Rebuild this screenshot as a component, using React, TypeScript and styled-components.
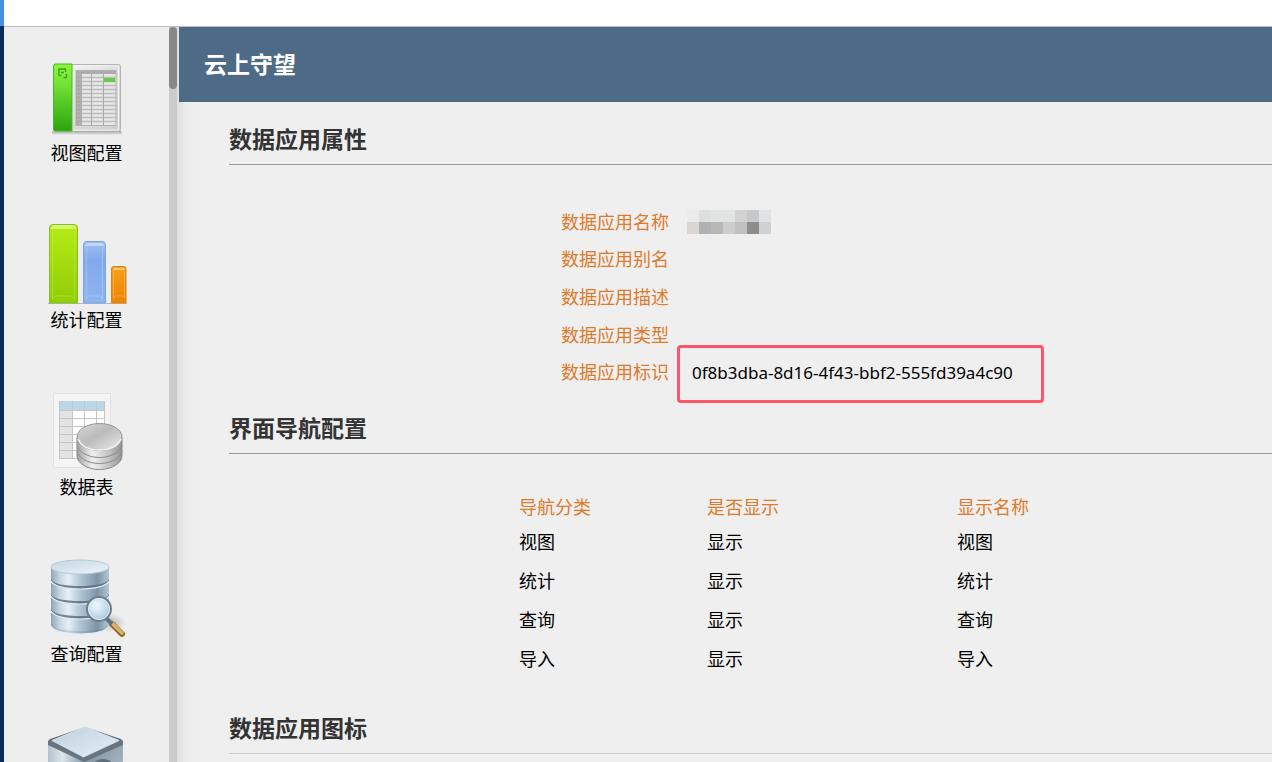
import React from 'react';
import styled, { createGlobalStyle } from 'styled-components';

const GlobalStyle = createGlobalStyle`
  * { box-sizing: border-box; }
  body {
    margin: 0;
    background: #efefef;
    color: #000;
    font-family: "Noto Sans", "Noto Sans CJK SC", sans-serif;
    font-size: 18px;
    line-height: 26px;
  }
`;

const Page = styled.div`
  display: flex;
  height: 100vh;
  overflow: hidden;
`;

const Rail = styled.div`
  flex: none;
  width: 4px;
  background: #0a2c5a;
`;

const RailTop = styled.div`
  height: 26px;
  background: #4a90e2;
`;

const Shell = styled.div`
  flex: 1;
  min-width: 0;
  display: flex;
  flex-direction: column;
`;

const TopBar = styled.header`
  flex: none;
  height: 27px;
  background: #fff;
  border-bottom: 1px solid #bdbdbd;
`;

const Body = styled.div`
  flex: 1;
  min-height: 0;
  display: flex;
`;

const Sidebar = styled.nav`
  flex: none;
  width: 165px;
  padding-top: 30px;
  display: flex;
  flex-direction: column;
  gap: 58px;
  background: #eee;
  overflow: hidden;
`;

const SideItem = styled.a`
  flex: none;
  display: flex;
  flex-direction: column;
  align-items: center;
  gap: 3px;
  color: #000;
  text-decoration: none;
`;

const Icon = styled.svg`
  display: block;
  width: 80px;
  height: 80px;
`;

const ScrollTrack = styled.div`
  flex: none;
  width: 8px;
  background: #cbcbcb;
`;

const ScrollThumb = styled.div`
  height: 62px;
  border-radius: 4px;
  background: #888;
`;

const Main = styled.main`
  flex: 1;
  min-width: 0;
  padding-left: 2px;
  overflow: hidden;
  background: linear-gradient(to right, #dedede 0, #ebebeb 8px, #efefef 18px);
`;

const TitleBar = styled.div`
  height: 75px;
  padding: 0 25px 2px;
  display: flex;
  align-items: center;
  background: #4d6b86;
`;

const Title = styled.h1`
  margin: 0;
  color: #fff;
  font-size: 23px;
  line-height: 32px;
  font-weight: 700;
`;

const Content = styled.div`
  padding: 21px 0 0 50px;
`;

const SectionTitle = styled.h2<{ $faint?: boolean }>`
  margin: 0;
  padding-bottom: 9px;
  border-bottom: 1px solid ${(p) => (p.$faint ? '#ccc' : '#999')};
  color: #333;
  font-size: 23px;
  line-height: 32px;
  font-weight: 700;
`;

const Fields = styled.dl`
  margin: 38px 0 21px 332px;
  height: 188px;
  display: grid;
  grid-template-columns: 126px 1fr;
  grid-template-rows: repeat(5, 1fr);
  align-items: center;
`;

const FieldName = styled.dt`
  color: #dd7a2b;
`;

const FieldValue = styled.dd`
  margin: 0;
`;

const Marked = styled.span`
  position: relative;
  padding-left: 5px;
  font-size: 17px;
`;

const Mark = styled.span`
  position: absolute;
  left: -10px;
  top: -16px;
  width: 367px;
  height: 58px;
  border: 3px solid #ff5566;
  border-radius: 4px;
`;

const Mosaic = styled.div`
  display: grid;
  grid-template-columns: repeat(7, 12px);
  width: 84px;
`;

const Tile = styled.span<{ $tone: string }>`
  height: 12px;
  background: ${(p) => p.$tone};
`;

const NavTable = styled.table`
  margin: 38px 0 34px 290px;
  border-collapse: collapse;
  table-layout: fixed;
  width: 600px;
`;

const HeadCell = styled.th<{ $width?: number }>`
  width: ${(p) => (p.$width ? `${p.$width}px` : 'auto')};
  height: 30px;
  padding: 0;
  color: #dd7a2b;
  font-weight: 400;
  text-align: left;
`;

const Cell = styled.td`
  height: 39px;
  padding: 0;
`;

const ViewIcon = () => (
  <Icon viewBox="0 0 80 80" aria-hidden="true">
    <defs>
      <linearGradient id="vGreen" x1="0" y1="0" x2="0" y2="1">
        <stop offset="0" stopColor="#8cf53c" />
        <stop offset="0.3" stopColor="#74e235" />
        <stop offset="1" stopColor="#2ba40f" />
      </linearGradient>
      <linearGradient id="vPaper" x1="0" y1="0" x2="1" y2="1">
        <stop offset="0" stopColor="#fafafa" />
        <stop offset="0.5" stopColor="#dedede" />
        <stop offset="1" stopColor="#cdcdcd" />
      </linearGradient>
      <linearGradient id="vShadow" x1="0" y1="0" x2="0" y2="1">
        <stop offset="0" stopColor="#555" stopOpacity="0.5" />
        <stop offset="1" stopColor="#555" stopOpacity="0" />
      </linearGradient>
    </defs>
    <rect x="5" y="74" width="70" height="4" rx="2" fill="url(#vShadow)" />
    <rect x="6.5" y="7.5" width="67" height="67" rx="2" fill="url(#vPaper)" stroke="#b4b4b4" />
    <path d="M25.500 9h46v64h-46z" fill="none" stroke="#f8f8f8" strokeWidth="1" opacity="0.8" />
    <path d="M8.500 7H25v67H8.500A2 2 0 0 1 6.500 72V9a2 2 0 0 1 2-2z" fill="url(#vGreen)" stroke="#46b624" />
    <path d="M18.500 15v-3h-6.500v6.500h2.500M19.500 17v3.500h-3M14 15.500h3" fill="none" stroke="#39a520" strokeWidth="1.400" />
    <rect x="29" y="13.500" width="40" height="55" fill="#e7e7e7" stroke="#b2b2b2" />
    <path d="M29 20.500h40M29 24.500h40M29 28.500h40M29 32.500h40M29 36.500h40M29 40.500h40M29 44.500h40M29 48.500h40M29 52.500h40M29 56.500h40M29 60.500h40M29 64.500h40" stroke="#bcbcbc" strokeWidth="1.400" />
    <rect x="29" y="14" width="6" height="54" fill="#a2a2a2" opacity="0.8" />
    <rect x="29" y="14" width="40" height="3" fill="#acacac" />
    <path d="M44.500 14v54M56.500 14v54" stroke="#aaa" />
    <rect x="57" y="21" width="11" height="4" fill="#6bc944" />
  </Icon>
);

const StatsIcon = () => (
  <Icon viewBox="0 0 80 80" aria-hidden="true">
    <defs>
      <linearGradient id="sGreen" x1="0" y1="0" x2="0" y2="1">
        <stop offset="0" stopColor="#b6eb16" />
        <stop offset="1" stopColor="#8fce06" />
      </linearGradient>
      <linearGradient id="sBlue" x1="0" y1="0" x2="0" y2="1">
        <stop offset="0" stopColor="#9cc0f6" />
        <stop offset="0.3" stopColor="#82a9ea" />
        <stop offset="1" stopColor="#8eb4f2" />
      </linearGradient>
      <linearGradient id="sOrange" x1="0" y1="0" x2="0" y2="1">
        <stop offset="0" stopColor="#f9a01a" />
        <stop offset="1" stopColor="#ee8400" />
      </linearGradient>
    </defs>
    <path d="M1 79.500h79" stroke="#b8b8b8" />
    <path d="M2.500 79V4q0-3.500 3.500-3.500h21q3.500 0 3.500 3.500v75z" fill="url(#sGreen)" stroke="#8dbb2c" />
    <path d="M4 5q0-4 4-4h17q4 0 4 4z" fill="#d9f77e" opacity="0.850" />
    <path d="M5.500 8v67l3-3h16l3 3V8" fill="none" stroke="#c4ee5a" opacity="0.450" />
    <path d="M36.500 79V21q0-3.500 3.500-3.500h15q3.500 0 3.500 3.500v58z" fill="url(#sBlue)" stroke="#7fa6e4" />
    <path d="M38 22q0-3 3-3h13q3 0 3 3z" fill="#c1d8fb" />
    <path d="M39.500 23v52l2-3h12l2 3V23" fill="none" stroke="#b9d3fb" opacity="0.500" />
    <path d="M64.500 79V45q0-2.500 2.500-2.500h9.500q2.500 0 2.500 2.500v34z" fill="url(#sOrange)" stroke="#d98220" />
    <path d="M66 46q0-2 2-2h8q2 0 2 2z" fill="#fcc875" />
    <path d="M66.500 47v27l2-2h7l2 2V47" fill="none" stroke="#fab653" opacity="0.700" />
  </Icon>
);

const TableIcon = () => (
  <Icon viewBox="0 0 80 80" aria-hidden="true">
    <defs>
      <linearGradient id="tSide" x1="0" y1="0" x2="1" y2="0">
        <stop offset="0" stopColor="#a2a2a2" />
        <stop offset="0.35" stopColor="#f0f0f0" />
        <stop offset="0.7" stopColor="#c4c4c4" />
        <stop offset="1" stopColor="#949494" />
      </linearGradient>
      <linearGradient id="tTop" x1="0" y1="0" x2="1" y2="1">
        <stop offset="0" stopColor="#d8d8d8" />
        <stop offset="0.45" stopColor="#bbb" />
        <stop offset="1" stopColor="#ececec" />
      </linearGradient>
    </defs>
    <rect x="6.500" y="2.500" width="57" height="74" rx="1" fill="#f5f5f5" stroke="#e2e2e2" />
    <rect x="12" y="10" width="46" height="58" fill="#fff" />
    <rect x="12" y="10" width="14" height="58" fill="#e3e3e3" />
    <rect x="12" y="10" width="46" height="9" fill="#bcd8e8" />
    <path d="M12 19.500h46M12 27.500h46M12 35.500h46M12 43.500h46M12 51.500h46M12 59.500h46M12.500 10v58M25.500 10v58M37.500 10v58M49.500 10v58M57.500 10v58M12 67.500h46" stroke="#c5c5c5" />
    {[18, 12, 6].map((y) => (
      <path
        key={y}
        d="M30 41v6c0 7 10 13.500 22.500 13.500S75 54 75 47v-6z"
        transform={`translate(0 ${y})`}
        fill="url(#tSide)"
        stroke="#8c8c8c"
      />
    ))}
    <ellipse cx="52.500" cy="46" rx="22.500" ry="13.500" fill="url(#tTop)" stroke="#969696" />
    <path d="M31 48c3 7 11 11 21.500 11S71 55 74 48" fill="none" stroke="#f4f4f4" strokeWidth="1.500" />
  </Icon>
);

const QueryIcon = () => (
  <Icon viewBox="0 0 80 80" aria-hidden="true">
    <defs>
      <linearGradient id="qSide" x1="0" y1="0" x2="1" y2="0">
        <stop offset="0" stopColor="#8fa5b6" />
        <stop offset="0.15" stopColor="#c6d6e1" />
        <stop offset="0.3" stopColor="#e6f0f6" />
        <stop offset="0.5" stopColor="#b2c6d4" />
        <stop offset="0.8" stopColor="#7c95a8" />
        <stop offset="1" stopColor="#b5c6d2" />
      </linearGradient>
      <linearGradient id="qTop" x1="0" y1="0" x2="1" y2="1">
        <stop offset="0" stopColor="#c4d7e2" />
        <stop offset="1" stopColor="#edf5f9" />
      </linearGradient>
      <radialGradient id="qLens" cx="0.4" cy="0.35" r="0.7">
        <stop offset="0" stopColor="#eff8fd" />
        <stop offset="0.6" stopColor="#c3dcec" />
        <stop offset="1" stopColor="#9fbfd5" />
      </radialGradient>
      <radialGradient id="qShadow">
        <stop offset="0" stopColor="#888" stopOpacity="0.6" />
        <stop offset="1" stopColor="#888" stopOpacity="0" />
      </radialGradient>
    </defs>
    <ellipse cx="62" cy="65" rx="17" ry="9" fill="url(#qShadow)" />
    {[50, 35, 20, 5].map((y) => (
      <g key={y} transform={`translate(0 ${y})`}>
        <path d="M4 5v13c1 5 13 8 29 8s28-3 29-8V5z" fill="url(#qSide)" />
        <path d="M4 16c2 5 14 7 29 7s27-2 29-7v2c-2 5-14 8-29 8S6 23 4 19z" fill="#506475" opacity={y === 50 ? 0.2 : 0.75} />
        <path d="M4 18c2 5 14 8 29 8s27-3 29-8" fill="none" stroke="#e5eef4" strokeWidth="1.200" />
      </g>
    ))}
    <ellipse cx="33" cy="9" rx="29" ry="7" fill="url(#qTop)" stroke="#b9c8d2" />
    <path d="M65 66l10 10" stroke="#8d682e" strokeWidth="6" strokeLinecap="round" />
    <path d="M65 65l10 10" stroke="#dfb267" strokeWidth="3.500" strokeLinecap="round" />
    <path d="M60 61l5 5" stroke="#63717c" strokeWidth="4" />
    <circle cx="52" cy="51" r="12" fill="url(#qLens)" stroke="#6c7e8b" strokeWidth="2" />
    <circle cx="52" cy="51" r="10.500" fill="none" stroke="#ddeaf2" />
  </Icon>
);

const BoxIcon = () => (
  <Icon viewBox="0 0 80 80" aria-hidden="true">
    <defs>
      <linearGradient id="bTop" x1="0" y1="0" x2="1" y2="1">
        <stop offset="0" stopColor="#bccfdb" />
        <stop offset="1" stopColor="#e8f1f6" />
      </linearGradient>
      <linearGradient id="bLeft" x1="0" y1="0" x2="1" y2="0">
        <stop offset="0" stopColor="#b5c3cf" />
        <stop offset="0.4" stopColor="#dbe5ec" />
        <stop offset="1" stopColor="#8398aa" />
      </linearGradient>
      <linearGradient id="bRight" x1="0" y1="0" x2="1" y2="1">
        <stop offset="0" stopColor="#7b8d9c" />
        <stop offset="1" stopColor="#b7c5cf" />
      </linearGradient>
    </defs>
    <path d="M1 18l36 17v43L1 61z" fill="url(#bLeft)" />
    <path d="M76 18L37 35v43l39-17z" fill="url(#bRight)" />
    <ellipse cx="56" cy="41" rx="10" ry="7" fill="#5e6e7b" />
    <path d="M38 2L3 14l-2 2v4l36 17 39-17v-4l-2-2z" fill="#66757f" />
    <path d="M38 2L5 15.500 36.500 32 72 15.500z" fill="url(#bTop)" stroke="#d7e3ea" />
  </Icon>
);

const sideItems = [
  { label: '视图配置', Art: ViewIcon },
  { label: '统计配置', Art: StatsIcon },
  { label: '数据表', Art: TableIcon },
  { label: '查询配置', Art: QueryIcon },
  { label: '', Art: BoxIcon },
];

const tiles = [
  '#eaebea', '#dedfdf', '#e2e3e3', '#e1e2e2', '#d2d3d1', '#c7c8c8', '#e0e2e3',
  '#dad6d2', '#afb1b4', '#b8b8b7', '#cccdce', '#bfc0c0', '#8e8d8b', '#ced2d5',
];

const navRows = ['视图', '统计', '查询', '导入'];

export default function App() {
  return (
    <Page>
      <GlobalStyle />
      <Rail>
        <RailTop />
      </Rail>
      <Shell>
        <TopBar />
        <Body>
          <Sidebar>
            {sideItems.map(({ label, Art }, i) => (
              <SideItem href="#" key={i}>
                <Art />
                {label}
              </SideItem>
            ))}
          </Sidebar>
          <ScrollTrack>
            <ScrollThumb />
          </ScrollTrack>
          <Main>
            <TitleBar>
              <Title>云上守望</Title>
            </TitleBar>
            <Content>
              <SectionTitle>数据应用属性</SectionTitle>
              <Fields>
                <FieldName>数据应用名称</FieldName>
                <FieldValue>
                  <Mosaic>
                    {tiles.map((tone, i) => (
                      <Tile key={i} $tone={tone} />
                    ))}
                  </Mosaic>
                </FieldValue>
                <FieldName>数据应用别名</FieldName>
                <FieldValue />
                <FieldName>数据应用描述</FieldName>
                <FieldValue />
                <FieldName>数据应用类型</FieldName>
                <FieldValue />
                <FieldName>数据应用标识</FieldName>
                <FieldValue>
                  <Marked>
                    0f8b3dba-8d16-4f43-bbf2-555fd39a4c90
                    <Mark />
                  </Marked>
                </FieldValue>
              </Fields>
              <SectionTitle>界面导航配置</SectionTitle>
              <NavTable>
                <thead>
                  <tr>
                    <HeadCell $width={188}>导航分类</HeadCell>
                    <HeadCell $width={250}>是否显示</HeadCell>
                    <HeadCell>显示名称</HeadCell>
                  </tr>
                </thead>
                <tbody>
                  {navRows.map((name) => (
                    <tr key={name}>
                      <Cell>{name}</Cell>
                      <Cell>显示</Cell>
                      <Cell>{name}</Cell>
                    </tr>
                  ))}
                </tbody>
              </NavTable>
              <SectionTitle $faint>数据应用图标</SectionTitle>
            </Content>
          </Main>
        </Body>
      </Shell>
    </Page>
  );
}
